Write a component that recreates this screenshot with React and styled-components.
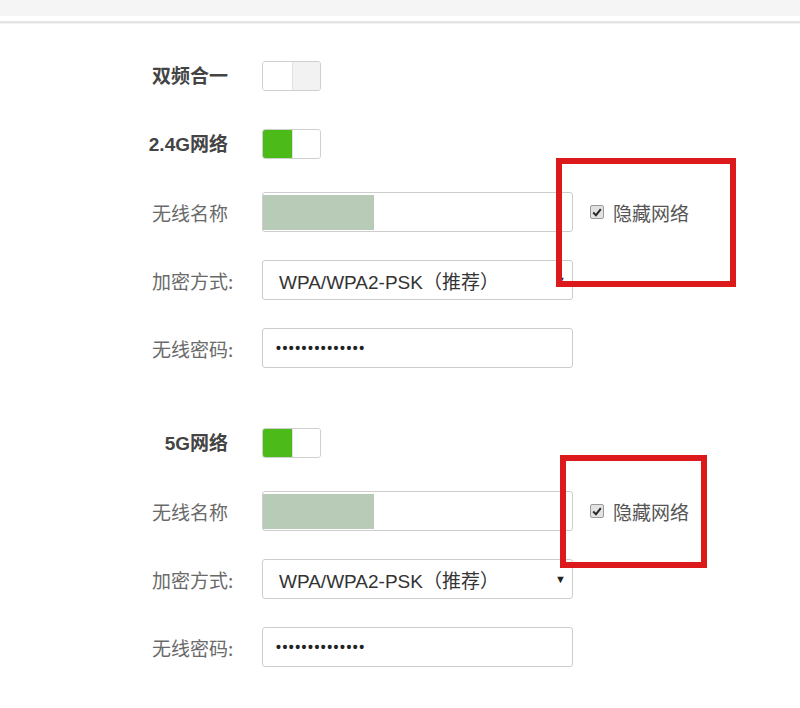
import React from "react";
import styled, { createGlobalStyle } from "styled-components";

const Global = createGlobalStyle`
  html, body { margin: 0; padding: 0; background: #fff; }
  body { font-family: "Noto Sans CJK SC", "Liberation Sans", sans-serif; }
`;

const Page = styled.div`
  width: 800px;
  height: 708px;
  position: relative;
  overflow: hidden;
  background: #fff;
`;

const TopBar = styled.div`
  height: 16px;
  background: #f5f5f5;
`;

const Rule = styled.div`
  margin-top: 5px;
  height: 2px;
  background: #e4e4e4;
  box-shadow: 0 1px 1px #f2f2f2;
`;

const Form = styled.div`
  padding: 33px 0 0 140px;
  display: flex;
  flex-direction: column;
  gap: 55px;
`;

const Section = styled.div`
  display: flex;
  flex-direction: column;
  gap: 28px;
`;

const Row = styled.div`
  display: grid;
  grid-template-columns: 122px 311px auto;
  align-items: center;
  height: 40px;
`;

const Label = styled.div`
  font-size: 19px;
  line-height: 1;
  font-family: ${(p) =>
    p.$strong
      ? '"Liberation Sans", "Noto Sans CJK SC", sans-serif'
      : '"Noto Sans CJK SC", sans-serif'};
  font-weight: ${(p) => (p.$strong ? 700 : 400)};
  color: ${(p) => (p.$strong ? "#444" : "#6a6a6a")};
  text-align: ${(p) => (p.$strong ? "right" : "left")};
  padding: ${(p) => (p.$strong ? "0 34px 0 0" : "0 0 0 12px")};
  white-space: nowrap;
`;

const Toggle = styled.div`
  width: 59px;
  height: 30px;
  box-sizing: border-box;
  border: 1px solid #cfcfcf;
  border-radius: 3px;
  display: grid;
  grid-template-columns: 1fr 1fr;
  overflow: hidden;
`;

const Half = styled.div`
  background: ${(p) => p.$bg};
  & + & {
    border-left: 1px solid ${(p) => (p.$on ? "#e0e0e0" : "#d6d6d6")};
  }
`;

const Field = styled.div`
  height: 40px;
  box-sizing: border-box;
  border: 1px solid #cdcdcd;
  border-radius: 3px;
  background: #fff;
  display: flex;
  align-items: center;
  position: relative;
  padding: ${(p) => p.$pad || "0"};
  font-family: "Liberation Sans", "Noto Sans CJK SC", sans-serif;
  font-size: 19px;
  color: #333;
`;

const Masked = styled.div`
  width: 111px;
  height: 35px;
  background: #b8cbb7;
`;

const SelectText = styled.span`
  flex: 1;
  white-space: nowrap;
`;

const Arrow = styled.span`
  font-size: 11px;
  color: #222;
  margin-right: 6px;
`;

const Dots = styled.span`
  font-size: 14px;
  font-weight: 700;
  letter-spacing: 1.5px;
  color: #222;
`;

const Hidden = styled.label`
  display: flex;
  align-items: center;
  gap: 9px;
  margin-left: 17px;
  font-size: 19px;
  color: #555;
  font-family: "Noto Sans CJK SC", sans-serif;
  white-space: nowrap;
`;

const Box = styled.span`
  width: 14px;
  height: 14px;
  box-sizing: border-box;
  border: 1px solid #9a9a9a;
  border-radius: 2px;
  background: #e2e2e2;
  display: flex;
  align-items: center;
  justify-content: center;
`;

const Mark = styled.div`
  position: absolute;
  box-sizing: border-box;
  border: 6px solid #dc1a1c;
  pointer-events: none;
`;

function Switch({ on }) {
  return (
    <Toggle>
      <Half $bg={on ? "#4cba19" : "#fff"} $on={on} />
      <Half $bg={on ? "#fff" : "#f2f2f2"} $on={on} />
    </Toggle>
  );
}

function Check() {
  return (
    <Box>
      <svg width="10" height="9" viewBox="0 0 10 9">
        <path d="M1.2 4.6 L4 7.2 L8.8 1.2" fill="none" stroke="#2a2a2a" strokeWidth="2" />
      </svg>
    </Box>
  );
}

function Band({ title }) {
  return (
    <Section>
      <Row>
        <Label $strong>{title}</Label>
        <Switch on />
      </Row>
      <Row>
        <Label>无线名称</Label>
        <Field>
          <Masked />
        </Field>
        <Hidden>
          <Check />
          隐藏网络
        </Hidden>
      </Row>
      <Row>
        <Label>加密方式:</Label>
        <Field $pad="0 0 0 16px">
          <SelectText>WPA/WPA2-PSK（推荐）</SelectText>
          <Arrow>▼</Arrow>
        </Field>
      </Row>
      <Row>
        <Label>无线密码:</Label>
        <Field $pad="0 0 0 13px">
          <Dots>••••••••••••••</Dots>
        </Field>
      </Row>
    </Section>
  );
}

export default function App() {
  return (
    <Page>
      <Global />
      <TopBar />
      <Rule />
      <Form>
        <Section>
          <Row>
            <Label $strong>双频合一</Label>
            <Switch on={false} />
          </Row>
          <Band title="2.4G网络" />
        </Section>
        <Band title="5G网络" />
      </Form>
      <Mark style={{ left: 556, top: 158, width: 180, height: 129 }} />
      <Mark style={{ left: 560, top: 455, width: 147, height: 113 }} />
    </Page>
  );
}
